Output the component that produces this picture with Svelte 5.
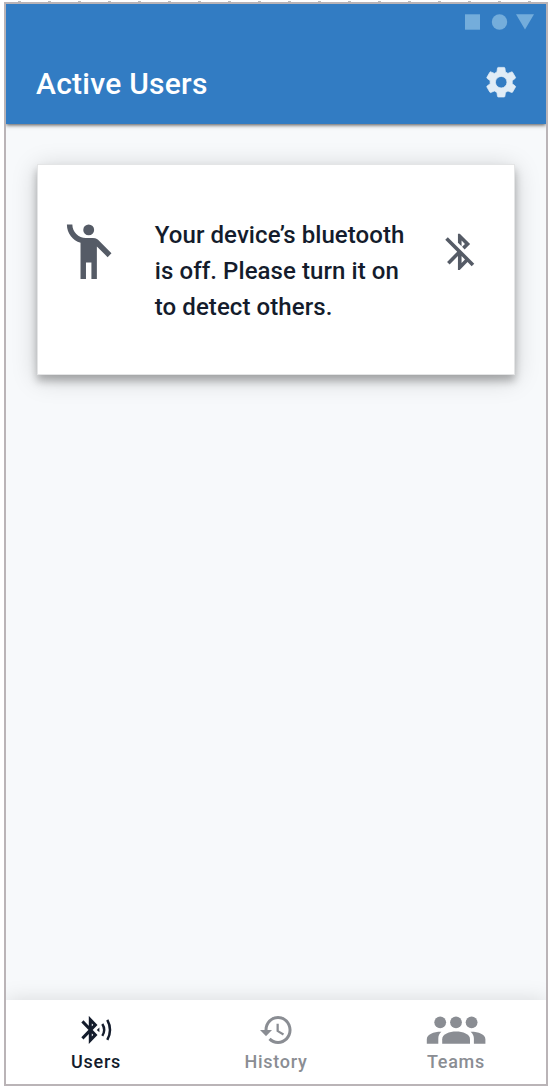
<script>
  const tabs = [
    { id: 'users', label: 'Users', active: true },
    { id: 'history', label: 'History', active: false },
    { id: 'teams', label: 'Teams', active: false }
  ];
</script>

<div class="page">
  <div class="ticks"></div>
  <main class="phone">
    <header>
      <svg class="status" width="70" height="16" viewBox="0 0 70 16" fill="#74addb">
        <rect x="0" y="0.3" width="15" height="15.4" />
        <circle cx="34.5" cy="8" r="7.7" />
        <path d="M51 0.2h18L60 15.6z" />
      </svg>
      <div class="bar">
        <h1>Active Users</h1>
        <svg width="36.4" height="36.4" viewBox="-.3 -.3 24.6 24.6" fill="#e0ecf6" stroke="#e0ecf6" stroke-width=".5">
          <path d="M19.43 12.98c.04-.32.07-.64.07-.98s-.03-.66-.07-.98l2.11-1.65c.19-.15.24-.42.12-.64l-2-3.46c-.12-.22-.39-.3-.61-.22l-2.49 1c-.52-.4-1.08-.73-1.69-.98l-.38-2.65C14.46 2.18 14.25 2 14 2h-4c-.25 0-.46.18-.49.42l-.38 2.65c-.61.25-1.17.59-1.69.98l-2.49-1c-.23-.09-.49 0-.61.22l-2 3.46c-.13.22-.07.49.12.64l2.11 1.65c-.04.32-.07.65-.07.98s.03.66.07.98l-2.11 1.65c-.19.15-.24.42-.12.64l2 3.46c.12.22.39.3.61.22l2.49-1c.52.4 1.08.73 1.69.98l.38 2.65c.03.24.24.42.49.42h4c.25 0 .46-.18.49-.42l.38-2.65c.61-.25 1.17-.59 1.69-.98l2.49 1c.23.09.49 0 .61-.22l2-3.46c.12-.22.07-.49-.12-.64l-2.11-1.65zM12 15.9a3.9 3.9 0 1 1 0-7.8 3.900 3.900 0 0 1 0 7.800z" />
        </svg>
      </div>
    </header>

    <section class="content">
      <article class="card">
        <svg class="person" width="65.4" height="65.4" viewBox="0 0 24 24" fill="#555b66">
          <circle cx="12" cy="4" r="2" />
          <path d="M15.89 8.11C15.5 7.72 14.83 7 13.53 7h-2.54C8.24 6.99 6 4.75 6 2H4c0 3.16 2.11 5.84 5 6.71V22h2v-6h2v6h2V10.05L18.95 14l1.41-1.41-4.47-4.48z" />
        </svg>
        <p>Your device’s bluetooth<br />is off. Please turn it on<br />to detect others.</p>
        <svg class="bt-off" width="43.5" height="43.5" viewBox="0 0 24 24" fill="#555b66">
          <path d="M13 5.83l1.88 1.88-1.6 1.6 1.41 1.41 3.02-3.02L12 2h-1v5.03l2 2v-3.2zM5.41 4L4 5.41 10.59 12 5 17.59 6.41 19 11 14.41V22h1l4.29-4.29 2.3 2.29L20 18.59 5.41 4zM13 18.17v-3.76l1.88 1.88L13 18.17z" />
        </svg>
      </article>
    </section>

    <nav>
      {#each tabs as tab (tab.id)}
        <div class="tab" class:active={tab.active}>
          {#if tab.id === 'users'}
            <svg width="32" height="28" viewBox="0 0 32 28" fill="none" stroke="currentColor" stroke-width="3">
              <path d="M2.4 5.4 15.4 18.9 10.3 24.2V3.6L15.4 8.9 2.4 22.4" />
              <path d="M19.4 11.6v4.6l-2.600-2.300z" fill="currentColor" stroke="none" />
              <path d="M22.3 8q3.8 5.9 0 11.800" stroke-width="2.400" />
              <path d="M27.300 3.900q5.400 10 0 20" stroke-width="2.500" />
            </svg>
          {:else if tab.id === 'history'}
            <svg width="32" height="28" viewBox="1 3 21.3 18" preserveAspectRatio="none" fill="currentColor">
              <path d="M13 3c-4.97 0-9 4.03-9 9H1l3.89 3.89.07.14L9 12H6c0-3.87 3.13-7 7-7s7 3.13 7 7-3.13 7-7 7c-1.93 0-3.68-.79-4.94-2.06l-1.42 1.42C8.27 19.99 10.51 21 13 21c4.97 0 9-4.03 9-9s-4.03-9-9-9zm-1 5v5l4.28 2.54.72-1.21-3.5-2.08V8H12z" />
            </svg>
          {:else}
            <svg width="60" height="28" viewBox="0 0 60 28" fill="currentColor">
              <circle cx="14.2" cy="6.3" r="5.9" />
              <circle cx="30" cy="6.3" r="5.9" />
              <circle cx="45.6" cy="6.3" r="5.9" />
              <path d="M16.2 27.7v-4.5c0-5 7.2-7.6 13.9-7.6S44 18.2 44 23.2v4.5z" />
              <path d="M.8 27.7v-4.5c0-5 7-7.6 14.6-7.5-2.3 1.8-3.1 4.3-3.1 7v5z" />
              <path d="M59.4 27.7v-4.5c0-5-7-7.6-14.8-7.5 2.3 1.8 3.3 4.3 3.3 7v5z" />
            </svg>
          {/if}
          <span>{tab.label}</span>
        </div>
      {/each}
    </nav>
  </main>
</div>

<style>
  :global(body) {
    background: #fff;
  }
  .page {
    box-sizing: border-box;
    width: 552px;
    height: 1088px;
    padding: 1px 4px 2px;
    font-family: Roboto, sans-serif;
    font-weight: 500;
  }
  .ticks {
    height: 1px;
    margin: 0 -4px;
    background: repeating-linear-gradient(90deg, transparent 0 18px, #bdbdbd 18px 21px, transparent 21px 30px);
  }
  .phone {
    box-sizing: border-box;
    width: 544px;
    height: 1084px;
    border: 2px solid #bab4b7;
    background: #f7f9fb;
    display: flex;
    flex-direction: column;
    overflow: hidden;
  }
  header {
    box-sizing: border-box;
    height: 120px;
    padding: 10px 11px 0 30px;
    background: #327cc3;
    box-shadow: 0 1px 4px rgba(0, 0, 0, 0.7);
    display: flex;
    flex-direction: column;
  }
  .status {
    align-self: flex-end;
  }
  .bar {
    display: flex;
    justify-content: space-between;
    align-items: center;
    height: 36.4px;
    margin-top: 33.7px;
    padding-right: 15.5px;
  }
  h1 {
    margin: 4px 0 0;
    font-size: 30px;
    line-height: 36px;
    font-weight: 500;
    letter-spacing: 0.25px;
    color: #fff;
  }
  .content {
    flex: 1;
    padding: 40px 31px 0;
  }
  .card {
    box-sizing: border-box;
    height: 211px;
    border: 1px solid #e4e5e6;
    background: #fff;
    box-shadow: 0 6px 8px rgba(0, 0, 0, 0.26), 0 4px 24px rgba(0, 0, 0, 0.18);
    display: flex;
    align-items: flex-start;
    padding: 51px 32.5px 0 18.4px;
  }
  .person {
    margin-top: 2.5px;
  }
  p {
    flex: 1;
    margin: 0.5px 0 0 33px;
    font-size: 24px;
    line-height: 36px;
    letter-spacing: 0.08px;
    color: #141c2c;
    white-space: nowrap;
  }
  .bt-off {
    margin-top: 13.5px;
  }
  nav {
    height: 84px;
    background: #fff;
    box-shadow: 0 0 20px rgba(0, 0, 0, 0.13);
    display: grid;
    grid-template-columns: repeat(3, 180px);
  }
  .tab {
    display: flex;
    flex-direction: column;
    align-items: center;
    padding-top: 16px;
    color: #8a8d93;
  }
  .tab.active {
    color: #141c2c;
  }
  span {
    margin-top: 7px;
    font-size: 18px;
    line-height: 22px;
    letter-spacing: 0.7px;
  }
</style>
